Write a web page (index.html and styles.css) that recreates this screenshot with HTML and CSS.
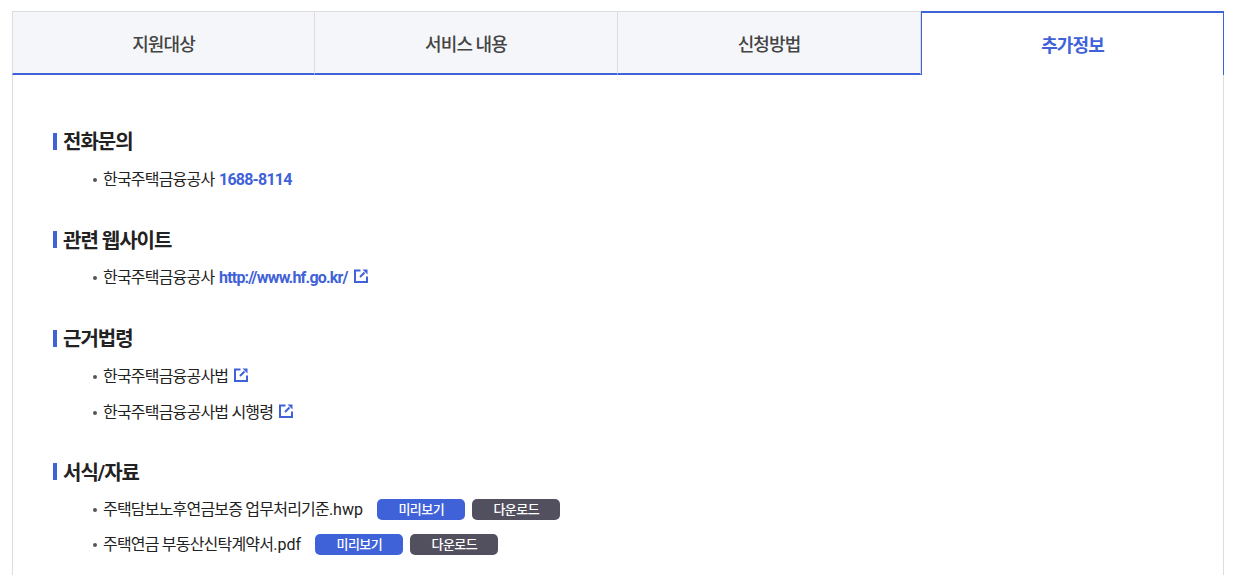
FILE: index.html
```html
<!DOCTYPE html>
<html lang="ko">
<head>
    <meta charset="UTF-8">
    <meta name="viewport" content="width=device-width, initial-scale=1.0">
    <title>추가정보</title>
    <link rel="stylesheet" href="styles.css">
</head>
<body>
    <div class="wrap">
        <ul class="tabs">
            <li class="tab">지원대상</li>
            <li class="tab">서비스 내용</li>
            <li class="tab">신청방법</li>
            <li class="tab active">추가정보</li>
        </ul>
        <div class="panel">
            <section class="block">
                <h3 class="title">전화문의</h3>
                <ul class="list">
                    <li>한국주택금융공사 <a class="link" href="#">1688-8114</a></li>
                </ul>
            </section>
            <section class="block">
                <h3 class="title">관련 웹사이트</h3>
                <ul class="list">
                    <li>한국주택금융공사 <a class="link" href="#">http://www.hf.go.kr/</a>
                        <svg class="ext" viewBox="0 0 14 14"><path d="M6.5 1.5H1v11.5h12V7.5M6 8l4.5-4.5"/><path class="head" d="M8.5 0.5h5v5z"/></svg></li>
                </ul>
            </section>
            <section class="block">
                <h3 class="title">근거법령</h3>
                <ul class="list">
                    <li>한국주택금융공사법
                        <svg class="ext" viewBox="0 0 14 14"><path d="M6.5 1.5H1v11.5h12V7.5M6 8l4.5-4.5"/><path class="head" d="M8.5 0.5h5v5z"/></svg></li>
                    <li>한국주택금융공사법 시행령
                        <svg class="ext" viewBox="0 0 14 14"><path d="M6.5 1.5H1v11.5h12V7.5M6 8l4.5-4.5"/><path class="head" d="M8.5 0.5h5v5z"/></svg></li>
                </ul>
            </section>
            <section class="block">
                <h3 class="title">서식/자료</h3>
                <ul class="list">
                    <li>주택담보노후연금보증 업무처리기준<span class="file-ext">.hwp</span>
                        <span class="btns"><a class="btn blue" href="#">미리보기</a><a class="btn dark" href="#">다운로드</a></span></li>
                    <li>주택연금 부동산신탁계약서<span class="file-ext">.pdf</span>
                        <span class="btns"><a class="btn blue" href="#">미리보기</a><a class="btn dark" href="#">다운로드</a></span></li>
                </ul>
            </section>
        </div>
    </div>
</body>
</html>
```

FILE: styles.css
```css
html, body {
    height: 100%;
    overflow: hidden;
}

body {
    margin: 0;
    padding: 11px 13px 0 12px;
    background: #fff;
    color: #222;
    font-family: Roboto, "Noto Sans CJK KR", sans-serif;
    font-size: 16px;
    letter-spacing: -0.8px;
}

ul {
    list-style: none;
    margin: 0;
    padding: 0;
}

.tabs {
    display: grid;
    grid-template-columns: repeat(4, 1fr);
    height: 64px;
}

.tab {
    display: flex;
    align-items: center;
    justify-content: center;
    box-sizing: border-box;
    background: #f5f6fa;
    border-top: 1px solid #ddd;
    border-right: 1px solid #ddd;
    border-bottom: 2px solid #3f62d8;
    color: #444;
    font-size: 18px;
    font-weight: 500;
    letter-spacing: -0.9px;
}

.tab:first-child {
    border-left: 1px solid #ddd;
}

.tab.active {
    background: #fff;
    border: 2px solid #3f62d8;
    border-bottom: none;
    border-left-width: 1px;
    border-right-width: 1px;
    color: #3f62d8;
    font-weight: 700;
}

.panel {
    border-left: 1px solid #ddd;
    border-right: 1px solid #ddd;
    padding: 55px 40px 60px;
    height: 600px;
}

.block {
    margin-bottom: 37px;
}

.block:nth-child(3) {
    margin-bottom: 36.5px;
}

.title {
    margin: 0 0 13px;
    padding-left: 10px;
    position: relative;
    font-size: 20px;
    font-weight: 700;
    line-height: 24px;
    letter-spacing: -1px;
    color: #222;
}

.block:nth-child(odd) .title {
    margin-bottom: 14px;
}

.title::before {
    content: "";
    position: absolute;
    left: 0;
    top: 3px;
    width: 4px;
    height: 17px;
    background: #3f62d8;
}

.block:nth-child(even) .title::before {
    top: 2px;
}

.list {
    padding-left: 50px;
}

.list li {
    position: relative;
    line-height: 24px;
    margin-bottom: 11.5px;
}

.block:last-child .list li {
    margin-bottom: 11px;
}

.list li::before {
    content: "";
    position: absolute;
    left: -10px;
    top: 10px;
    width: 4px;
    height: 4px;
    border-radius: 50%;
    background: #555;
}

.list li:last-child {
    margin-bottom: 0;
}

.link {
    margin-left: 1.5px;
    color: #3f62d8;
    font-weight: 700;
    text-decoration: none;
}

.file-ext {
    letter-spacing: 0;
}

.ext {
    width: 14px;
    height: 14px;
    margin-left: 3px;
    fill: none;
    stroke: #3f62d8;
    stroke-width: 2;
}

.ext .head {
    fill: #3f62d8;
    stroke: none;
}

.btns {
    display: inline-flex;
    gap: 7px;
    margin-left: 11.2px;
    vertical-align: top;
    padding-top: 1px;
}

.btn {
    width: 88px;
    height: 21px;
    line-height: 21px;
    border-radius: 5px;
    color: #fff;
    font-size: 13px;
    font-weight: 500;
    letter-spacing: -0.5px;
    text-align: center;
    text-decoration: none;
}

.btn.blue {
    background: #3f62d8;
}

.btn.dark {
    background: #52505e;
}
```
